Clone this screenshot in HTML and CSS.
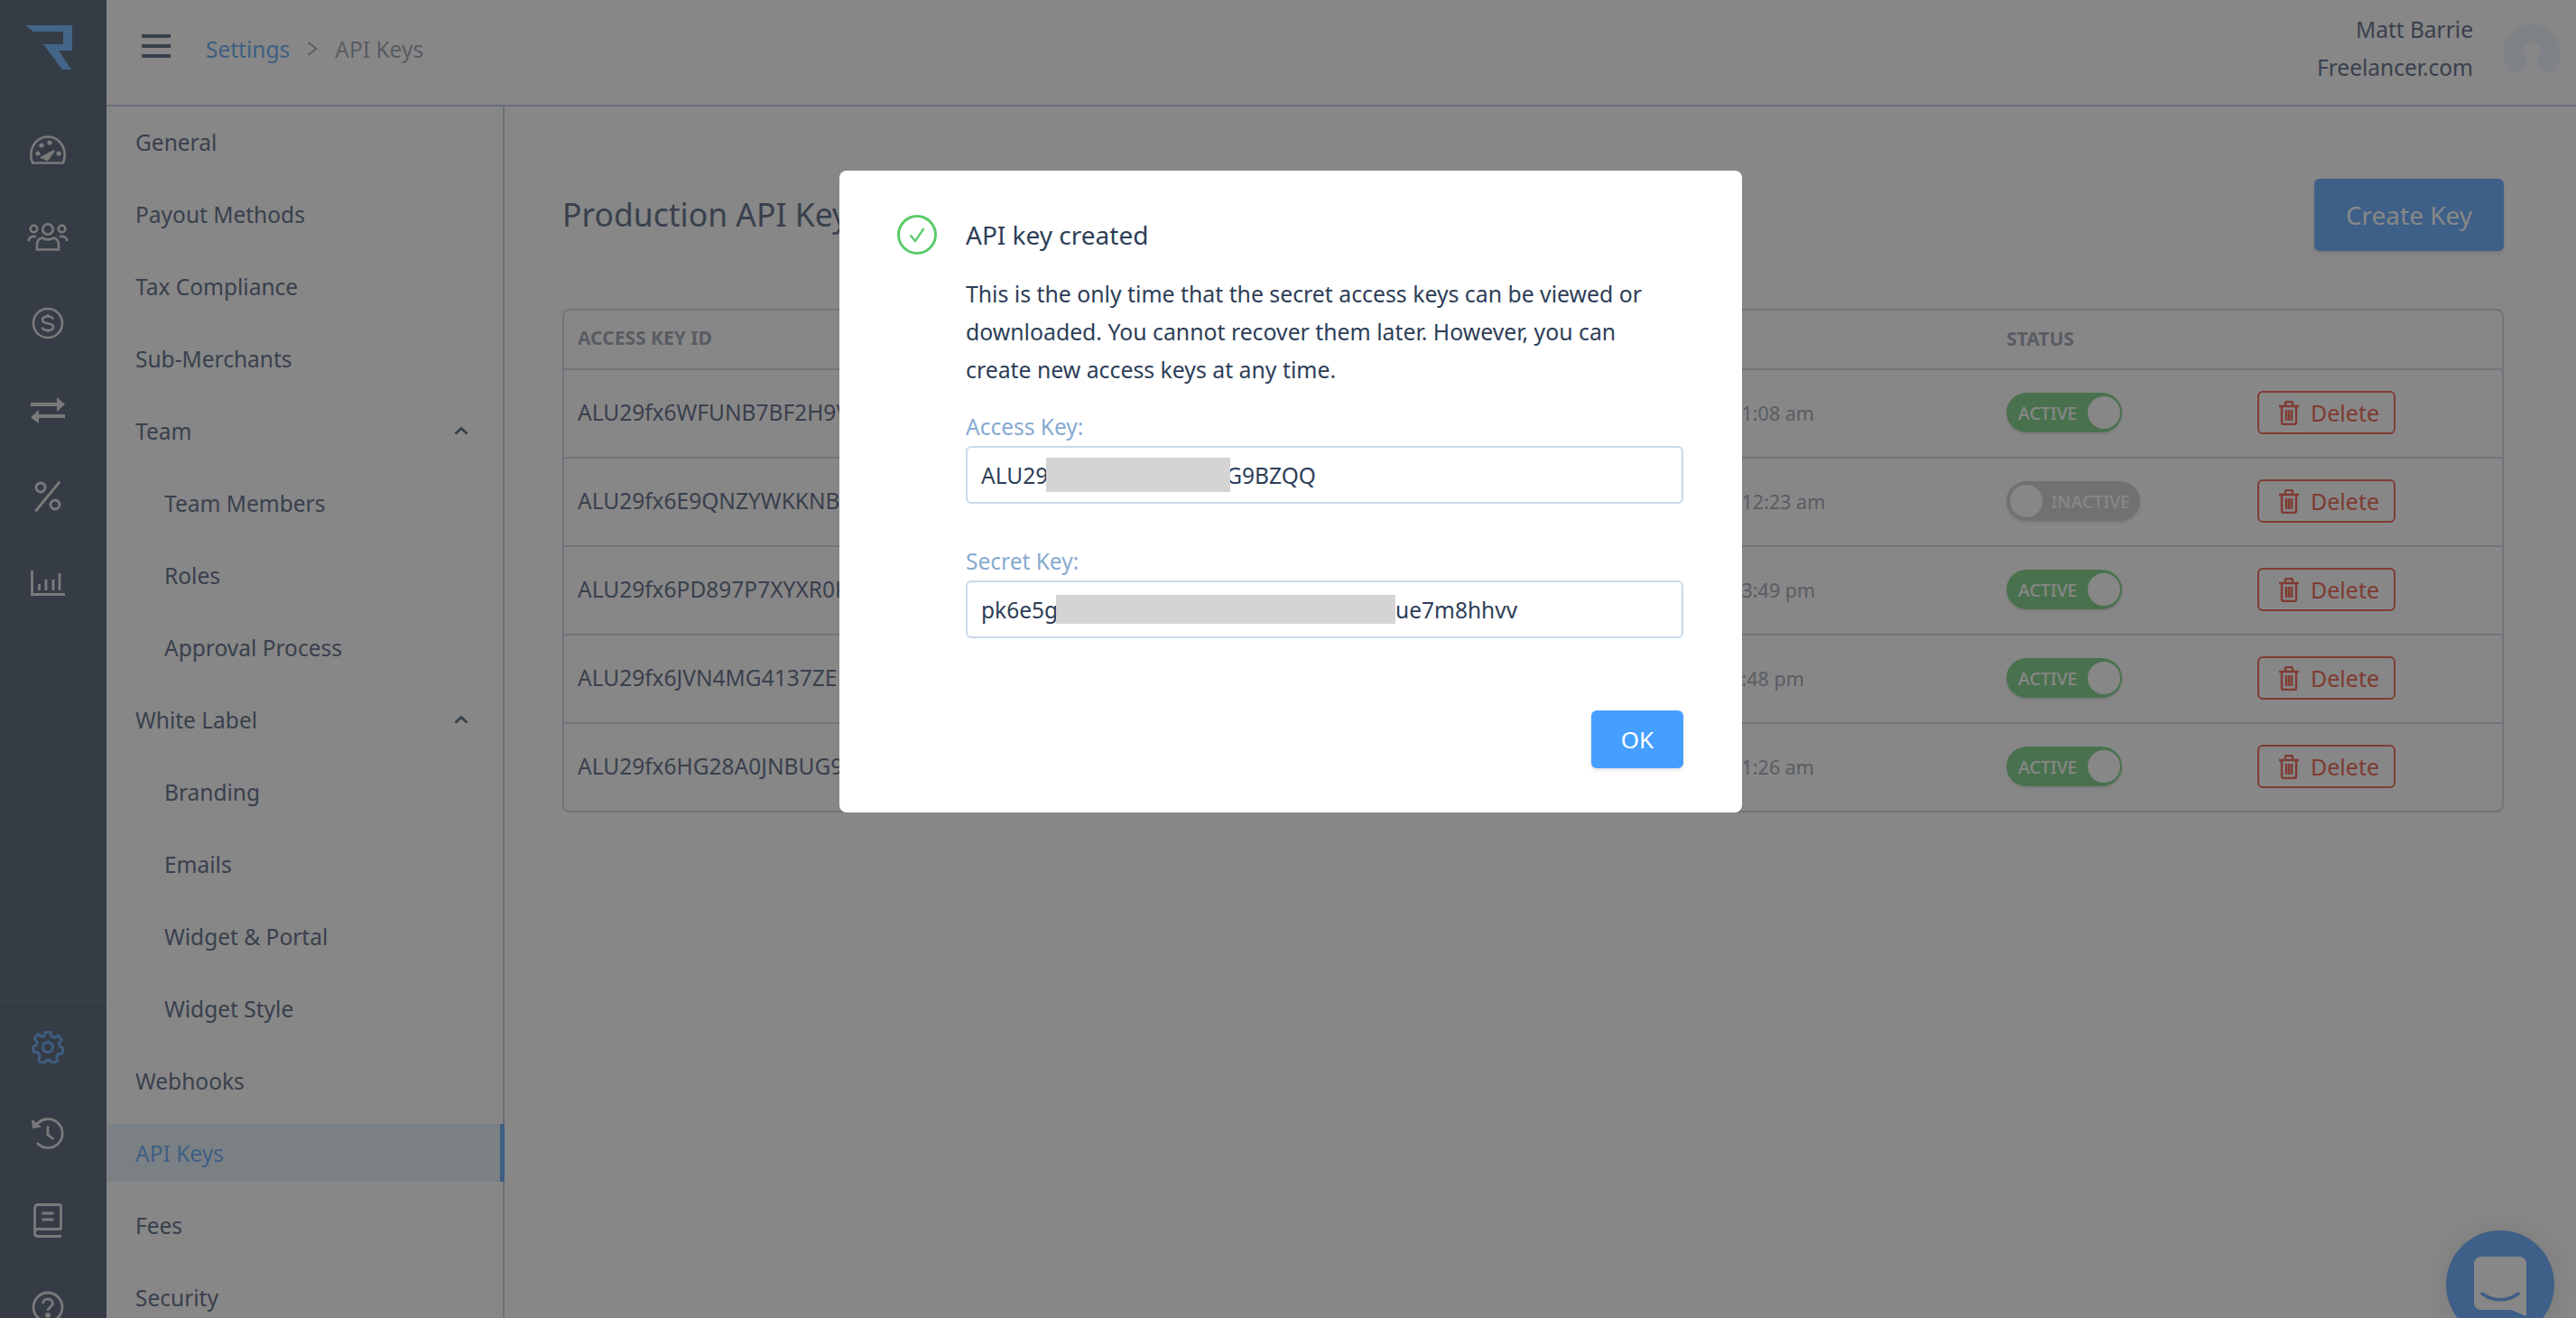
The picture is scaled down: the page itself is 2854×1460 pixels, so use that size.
FILE: index.html
```html
<!DOCTYPE html>
<html lang="en">
<head>
<meta charset="utf-8">
<title>API Keys</title>
<link rel="stylesheet" href="styles.css">
</head>
<body>
<div class="app">
  <aside class="rail">
    <div class="rail-logo">
      <svg width="52" height="50" viewBox="0 0 52 50"><path d="M0 0H52V28H37L51 49H41L20 21H42V7H9Z" fill="#7fbfff"/></svg>
    </div>
    <nav class="rail-top">
      <a class="rail-icon"><svg viewBox="0 0 40 32" width="40" height="32" fill="none" stroke="currentColor" stroke-width="2.6"><path d="M3 30.5C1.8 27.5 1.3 25 1.3 21.5 1.3 10.5 9.5 1.5 20 1.5s18.700 9 18.700 20c0 3.500-.5 6-1.700 9z"/><path d="M12 25l15-8-8 11" fill="currentColor" stroke-width="2"/><circle cx="9" cy="20" r="1.300" fill="currentColor"/><circle cx="13" cy="11" r="1.300" fill="currentColor"/><circle cx="22" cy="8" r="1.300" fill="currentColor"/><circle cx="32" cy="20" r="1.300" fill="currentColor"/></svg></a>
      <a class="rail-icon"><svg viewBox="0 0 46 32" width="46" height="32" fill="none" stroke="currentColor" stroke-width="2.6"><circle cx="23" cy="8" r="5.700"/><circle cx="7.500" cy="7.500" r="3.800"/><circle cx="38.500" cy="7.500" r="3.800"/><path d="M11 30.500v-5c0-5 3-7.500 6-8 3 2.500 9 2.500 12 0 3 .5 6 3 6 8v5z"/><path d="M1.500 21c.5-3 2.500-5 5.500-5h3M44.500 21c-.5-3-2.500-5-5.500-5h-3"/></svg></a>
      <a class="rail-icon"><svg viewBox="0 0 36 36" width="36" height="36" fill="none" stroke="currentColor" stroke-width="2.600"><circle cx="18" cy="18" r="16"/><path d="M24 13.500c-1-2-3-3-6-3-3.500 0-6 1.500-6 4 0 5.500 12 2 12 7.500 0 2.500-2.500 4-6 4-3 0-5.500-1-6.500-3.500M18 8v3M18 25v3"/></svg></a>
      <a class="rail-icon"><svg viewBox="0 0 38 30" width="38" height="30" fill="currentColor"><path d="M0 7h29V1l9 8-9 8v-6H0zM38 20H9v-5l-9 8.500L9 30v-6h29z"/></svg></a>
      <a class="rail-icon"><svg viewBox="0 0 30 34" width="30" height="34" fill="none" stroke="currentColor" stroke-width="2.800"><path d="M27.500 1.500 2 32.500" stroke-linecap="round"/><circle cx="7" cy="7" r="5"/><circle cx="23" cy="26" r="5"/></svg></a>
      <a class="rail-icon"><svg viewBox="0 0 38 28" width="38" height="28" fill="none" stroke="currentColor" stroke-width="2.800"><path d="M1.500 0v26.500H38"/><path d="M9.500 22v-7M17 22V10M25 22v-12M32 22V3"/></svg></a>
    </nav>
    <nav class="rail-bottom">
      <a class="rail-icon rail-icon-on"><svg viewBox="0 0 36 36" width="36" height="36" fill="none" stroke="currentColor" stroke-width="2.800" stroke-linejoin="round"><circle cx="18" cy="18" r="5.500"/><path d="M15 1.500h6l1 4.500 3.500 1.500 4-2.500 4 5-3 3.500.5 3.500 4 2-1 6-4.500.5-2 3 1.500 4.500-5.500 3-3-3.500h-4l-3 3.500-5.500-3L9 27l-2-3-4.500-.5-1-6 4-2 .5-3.500-3-3.500 4-5 4 2.500L14 6z"/></svg></a>
      <a class="rail-icon"><svg viewBox="0 0 36 36" width="36" height="36" fill="none" stroke="currentColor" stroke-width="2.800"><path d="M5 8.500A16 16 0 1 1 6 28"/><path d="M0 1.500 1 12l10-1.500z" fill="currentColor" stroke="none"/><path d="M18 9.500V19l6.500 5"/></svg></a>
      <a class="rail-icon"><svg viewBox="0 0 32 38" width="32" height="38" fill="none" stroke="currentColor" stroke-width="2.800" stroke-linejoin="round"><path d="M31 28.500H5c-2 0-3.500 1.300-3.500 3.500v1.500C1.500 35.700 3 36.500 5 36.500h26M30.500 1.500H5C3 1.500 1.500 3 1.500 5v27M30.500 1.500v27"/><path d="M9.500 11h13M9.500 18h13"/></svg></a>
      <a class="rail-icon"><svg viewBox="0 0 36 36" width="36" height="36" fill="none" stroke="currentColor" stroke-width="2.800"><circle cx="18" cy="18" r="16"/><path d="M12.500 14c0-3 2.500-5 5.500-5s5.500 2 5.500 4.800c0 4.200-5.500 3.700-5.500 8.200"/><circle cx="18" cy="27" r="1.500" fill="currentColor"/></svg></a>
    </nav>
  </aside>
  <div class="main">
    <header class="topbar">
      <button class="hamburger"><span></span><span></span><span></span></button>
      <div class="crumbs"><a class="crumb-link">Settings</a><svg class="crumb-sep" width="12" height="18" viewBox="0 0 12 18" fill="none" stroke="currentColor" stroke-width="2"><path d="M1.500 2 10.500 9l-9 7"/></svg><span>API Keys</span></div>
      <div class="user">
        <div class="user-text"><div>Matt Barrie</div><div>Freelancer.com</div></div>
        <svg class="avatar" width="64" height="64" viewBox="0 0 64 64"><defs><clipPath id="avclip"><circle cx="32" cy="32" r="32"/></clipPath></defs><g clip-path="url(#avclip)"><rect width="64" height="64" fill="#f0f5ff"/><path d="M32 20c5.500 0 9.500 3.500 9.500 9 0 6-3 11-4.500 15-.3 1.500.5 2.500 2 3l15 8v9H10v-9l15-8c1.500-.5 2.300-1.500 2-3-1.500-4-4.500-9-4.500-15 0-5.500 4-9 9.500-9z" fill="#ffffff"/></g></svg>
      </div>
    </header>
    <div class="body">
      <nav class="menu">
        <a class="menu-item">General</a>
        <a class="menu-item">Payout Methods</a>
        <a class="menu-item">Tax Compliance</a>
        <a class="menu-item">Sub-Merchants</a>
        <a class="menu-item">Team<svg class="chev" width="16" height="10" viewBox="0 0 16 10" fill="none" stroke="currentColor" stroke-width="3"><path d="M1.500 8.500 8 2.500l6.500 6"/></svg></a>
        <a class="menu-item sub">Team Members</a>
        <a class="menu-item sub">Roles</a>
        <a class="menu-item sub">Approval Process</a>
        <a class="menu-item">White Label<svg class="chev" width="16" height="10" viewBox="0 0 16 10" fill="none" stroke="currentColor" stroke-width="3"><path d="M1.500 8.500 8 2.500l6.500 6"/></svg></a>
        <a class="menu-item sub">Branding</a>
        <a class="menu-item sub">Emails</a>
        <a class="menu-item sub">Widget &amp; Portal</a>
        <a class="menu-item sub">Widget Style</a>
        <a class="menu-item">Webhooks</a>
        <a class="menu-item active">API Keys</a>
        <a class="menu-item">Fees</a>
        <a class="menu-item">Security</a>
      </nav>
      <main class="content">
        <div class="content-head">
          <h1 class="page-title">Production API Keys</h1>
          <button class="create-btn">Create Key</button>
        </div>
        <div class="table">
          <div class="row head"><div class="c-key">ACCESS KEY ID</div><div class="c-date">CREATED</div><div class="c-status">STATUS</div><div></div></div>
          <div class="row"><div class="c-key">ALU29fx6WFUNB7BF2H9V</div><div class="c-date">Jan 12, 2020 1:08 am</div><div class="c-status"><span class="toggle on"><span class="t-label">ACTIVE</span><span class="knob"></span></span></div><div><button class="del"><svg class="trash" width="22" height="27" viewBox="0 0 22 27" fill="none" stroke="currentColor" stroke-width="2.400"><path d="M0 6h22M3 6v18c0 1.300.8 2 2 2h12c1.200 0 2-.7 2-2V6M7 6V2.500C7 1.500 7.800 1 8.500 1h5c.7 0 1.500.5 1.500 1.500V6M8 10v12M11 10v12M14 10v12"/></svg>Delete</button></div></div>
          <div class="row"><div class="c-key">ALU29fx6E9QNZYWKKNBR</div><div class="c-date">Jan 12, 2020 12:23 am</div><div class="c-status"><span class="toggle off"><span class="knob"></span><span class="t-label">INACTIVE</span></span></div><div><button class="del"><svg class="trash" width="22" height="27" viewBox="0 0 22 27" fill="none" stroke="currentColor" stroke-width="2.400"><path d="M0 6h22M3 6v18c0 1.300.8 2 2 2h12c1.200 0 2-.7 2-2V6M7 6V2.500C7 1.500 7.800 1 8.500 1h5c.7 0 1.500.5 1.500 1.500V6M8 10v12M11 10v12M14 10v12"/></svg>Delete</button></div></div>
          <div class="row"><div class="c-key">ALU29fx6PD897P7XYXR0K</div><div class="c-date">Jan 12, 2020 3:49 pm</div><div class="c-status"><span class="toggle on"><span class="t-label">ACTIVE</span><span class="knob"></span></span></div><div><button class="del"><svg class="trash" width="22" height="27" viewBox="0 0 22 27" fill="none" stroke="currentColor" stroke-width="2.400"><path d="M0 6h22M3 6v18c0 1.300.8 2 2 2h12c1.200 0 2-.7 2-2V6M7 6V2.500C7 1.500 7.800 1 8.500 1h5c.7 0 1.500.5 1.500 1.500V6M8 10v12M11 10v12M14 10v12"/></svg>Delete</button></div></div>
          <div class="row"><div class="c-key">ALU29fx6JVN4MG4137ZE</div><div class="c-date">Jan 2, 2020 3:48 pm</div><div class="c-status"><span class="toggle on"><span class="t-label">ACTIVE</span><span class="knob"></span></span></div><div><button class="del"><svg class="trash" width="22" height="27" viewBox="0 0 22 27" fill="none" stroke="currentColor" stroke-width="2.400"><path d="M0 6h22M3 6v18c0 1.300.8 2 2 2h12c1.200 0 2-.7 2-2V6M7 6V2.500C7 1.500 7.800 1 8.500 1h5c.7 0 1.500.5 1.500 1.500V6M8 10v12M11 10v12M14 10v12"/></svg>Delete</button></div></div>
          <div class="row"><div class="c-key">ALU29fx6HG28A0JNBUG9</div><div class="c-date">Jan 12, 2020 1:26 am</div><div class="c-status"><span class="toggle on"><span class="t-label">ACTIVE</span><span class="knob"></span></span></div><div><button class="del"><svg class="trash" width="22" height="27" viewBox="0 0 22 27" fill="none" stroke="currentColor" stroke-width="2.400"><path d="M0 6h22M3 6v18c0 1.300.8 2 2 2h12c1.200 0 2-.7 2-2V6M7 6V2.500C7 1.500 7.800 1 8.500 1h5c.7 0 1.500.5 1.500 1.500V6M8 10v12M11 10v12M14 10v12"/></svg>Delete</button></div></div>
        </div>
      </main>
    </div>
  </div>
  <div class="chat">
    <svg width="58" height="66" viewBox="0 0 58 66"><path d="M8 0h42c4 0 8 3 8 8v58l-17-7H8c-4 0-8-3-8-8V8c0-5 4-8 8-8z" fill="#ffffff"/><path d="M9 41c12 9 28 9 40 0" fill="none" stroke="#76b3f5" stroke-width="3.500" stroke-linecap="round"/></svg>
  </div>
</div>
<div class="overlay">
  <section class="modal">
    <svg class="ok-icon" width="44" height="44" viewBox="0 0 44 44" fill="none" stroke="#5ccb6a"><circle cx="22" cy="22" r="20.500" stroke-width="3"/><path d="M14.500 22.500 20 29l9.500-14" stroke-width="2.400"/></svg>
    <div class="modal-body">
      <h2 class="modal-title">API key created</h2>
      <p class="modal-text">This is the only time that the secret access keys can be viewed or downloaded. You cannot recover them later. However, you can create new access keys at any time.</p>
      <label class="field-label">Access Key:</label>
      <div class="field">ALU29<span class="redact redact-a"></span><span class="tail-a">G9BZQQ</span></div>
      <label class="field-label field-label-2">Secret Key:</label>
      <div class="field">pk6e5g<span class="redact redact-b"></span>ue7m8hhvv</div>
      <div class="modal-foot"><button class="ok-btn">OK</button></div>
    </div>
  </section>
</div>
</body>
</html>
```
FILE: styles.css
```css
* { box-sizing: border-box; }
html, body { margin: 0; height: 100%; }
body {
  width: 2854px; height: 1460px; overflow: hidden; position: relative;
  font-family: "Noto Sans", "Open Sans", sans-serif; color: #6d7991; background: #fff;
}
button { font-family: inherit; cursor: pointer; }
h1, h2, p { margin: 0; font-weight: 400; }

.app { display: flex; height: 1460px; overflow: hidden; position: relative; }

.rail { width: 118px; flex: none; background: #667184; color: #e6e6e6; display: flex; flex-direction: column; height: 1460px; }
.rail-logo { height: 116px; padding: 28px 0 0 28px; border-bottom: 2px solid #6e7a8e; }
.rail-top { display: flex; flex-direction: column; padding-top: 1px; }
.rail-bottom { margin-top: auto; display: flex; flex-direction: column; border-top: 2px solid #6e7a8e; height: 351px; }
.rail-icon { height: 96px; flex: none; display: flex; align-items: center; justify-content: center; padding-right: 13px; padding-top: 2px; }
.rail-icon-on { color: #76b3f5; }

.main { flex: 1; display: flex; flex-direction: column; min-width: 0; }
.topbar { height: 118px; flex: none; display: flex; align-items: center; border-bottom: 2px solid #c6d4e6; padding: 0 17px 0 39px; }
.hamburger { width: 32px; height: 26px; padding: 0; border: 0; background: none; display: flex; flex-direction: column; justify-content: space-between; margin-top: -15px; }
.hamburger span { display: block; height: 4px; background: #6d7991; }
.crumbs { display: flex; align-items: center; margin-left: 39px; font-size: 24.5px; color: #a9afbb; gap: 19px; margin-top: -8px; }
.crumb-link { color: #76b3f5; }
.crumb-sep { color: #a9afbb; }
.user { margin-left: auto; display: flex; align-items: center; gap: 33px; }
.user-text { text-align: right; font-size: 24.5px; line-height: 42px; color: #6d7991; margin-top: -8px; }
.avatar { margin-top: 2px; display: block; }

.body { flex: 1; display: flex; min-height: 0; }
.menu { width: 441px; flex: none; border-right: 2px solid #c6d4e6; padding-top: 7px; display: flex; flex-direction: column; gap: 16px; }
.menu-item { height: 64px; flex: none; display: flex; align-items: center; justify-content: space-between; padding: 0 38px 0 32px; font-size: 24.5px; color: #6d7991; }
.menu-item.sub { padding-left: 64px; }
.menu-item.active { color: #76b3f5; background: #e9f2fb; border-right: 5px solid #76b3f5; margin-right: -2px; padding-right: 35px; }
.chev { color: #6d7991; }

.content { flex: 1; padding: 80px 80px 0 64px; min-width: 0; }
.content-head { display: flex; align-items: center; justify-content: space-between; height: 80px; margin-bottom: 64px; }
.page-title { font-size: 35.5px; color: #6d7991; margin-top: -3px; }
.create-btn { width: 210px; height: 80px; border: 0; border-radius: 6px; background: #76b3ff; color: #fff; font-size: 28px; box-shadow: 0 2px 4px rgba(0,0,0,.12); }

.table { border: 2px solid #d3dce8; border-radius: 8px; }
.row { display: grid; grid-template-columns: 1177px 421px 278px 1fr; align-items: center; height: 98px; padding-bottom: 2px; border-bottom: 2px solid #d3dce8; font-size: 24.5px; color: #6d7991; }
.row:last-child { border-bottom: 0; height: 96px; }
.row.head { height: 66px; font-size: 21px; font-weight: 700; color: #a9afbb; }
.c-key { padding-left: 15px; padding-bottom: 2px; }
.c-date { color: #a9afbb; font-size: 21.5px; }
.row.head .c-date, .row.head .c-status { font-size: 21px; }
.c-status { display: flex; }

.toggle { display: flex; align-items: center; height: 44px; border-radius: 22px; color: #fff; font-size: 19.5px; font-weight: 500; padding: 0 4px; box-shadow: 0 2px 3px rgba(0,0,0,.1); }
.toggle.on { width: 128px; background: #8dd694; justify-content: space-between; padding-left: 13px; padding-right: 2px; }
.toggle.off { width: 148px; background: #d5d5d5; justify-content: space-between; padding-left: 4px; padding-right: 11px; }
.knob { width: 36px; height: 36px; border-radius: 50%; background: #fff; flex: none; }
.del { display: flex; align-items: center; gap: 13px; width: 153px; height: 48px; padding: 0 0 0 22px; border: 2px solid #f0705f; border-radius: 6px; background: transparent; color: #f0705f; font-size: 25px; }

.chat { position: absolute; left: 2710px; top: 1363px; width: 120px; height: 120px; border-radius: 50%; background: #76b3ff; display: flex; justify-content: center; padding-top: 29px; box-shadow: 0 0 30px rgba(0,0,0,.1); }
.chat svg { display: block; }

.overlay { position: absolute; inset: 0; background: rgba(0,0,0,.47); }
.modal { position: absolute; left: 930px; top: 189px; width: 1000px; height: 711px; background: #fff; border-radius: 8px; padding: 49px 65px 0 64px; display: flex; gap: 32px; color: #2d3e57; }
.ok-icon { flex: none; }
.modal-body { flex: 1; min-width: 0; }
.modal-title { font-size: 28px; line-height: 44px; margin-bottom: 22px; }
.modal-text { font-size: 24.8px; line-height: 42px; margin-bottom: 26px; max-width: 770px; }
.field-label { display: block; font-size: 24.5px; line-height: 34px; color: #86aad0; margin-bottom: 4px; }
.field-label-2 { margin-top: 47px; }
.field { height: 64px; border: 2px solid #c9d9ea; border-radius: 6px; display: flex; align-items: center; padding-left: 15px; font-size: 24.5px; color: #2d3e57; }
.redact { display: inline-block; background: #d4d4d4; position: relative; flex: none; }
.redact-a { width: 204px; height: 38px; margin-left: -2px; }
.redact-b { width: 376px; height: 32px; margin-left: -2px; }
.tail-a { margin-left: -5px; }
.modal-foot { display: flex; justify-content: flex-end; margin-top: 80px; }
.ok-btn { width: 102px; height: 64px; border: 0; border-radius: 6px; background: #459fff; color: #fff; font-size: 26px; box-shadow: 0 2px 4px rgba(0,0,0,.12); }
```
